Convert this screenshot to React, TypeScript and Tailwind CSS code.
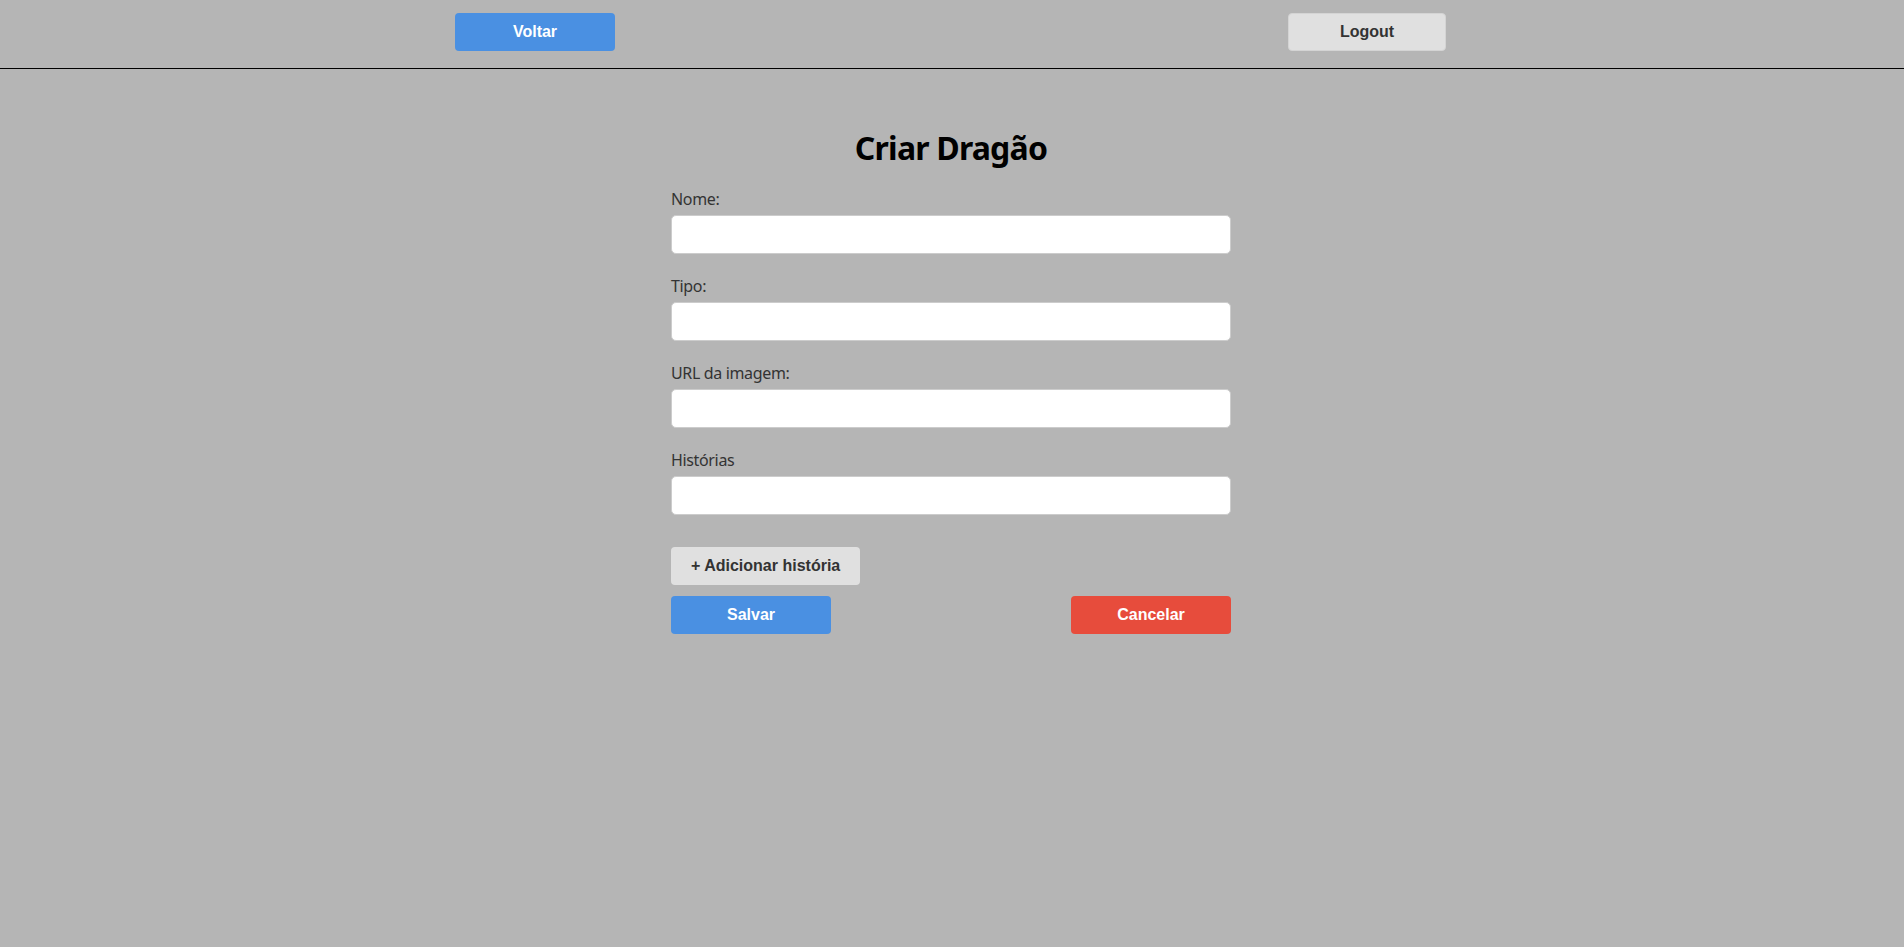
import React from "react";

const sans = { fontFamily: '"Noto Sans", "Open Sans", sans-serif' };
const arial = { fontFamily: '"Liberation Sans", Arial, sans-serif' };

function Field({ label }: { label: string }) {
  return (
    <div className="mb-[22px]">
      <label
        className="block text-[16px] leading-[20px] mb-[6px] text-[#333333] tracking-[-0.35px]"
        style={sans}
      >
        {label}
      </label>
      <input
        type="text"
        className="block w-full h-[39px] bg-white border border-[#cccccc] rounded-[5px] px-[10px] outline-none"
      />
    </div>
  );
}

export default function App() {
  return (
    <div className="min-h-screen bg-[#b5b5b5]">
      <header className="h-[69px] border-b border-black">
        <div className="w-[991px] ml-[455px] flex justify-between pt-[13px]">
          <button
            className="w-[160px] h-[38px] rounded-[4px] bg-[#4a90e2] text-white font-bold text-[16px]"
            style={arial}
          >
            Voltar
          </button>
          <button
            className="w-[158px] h-[38px] rounded-[4px] bg-[#e0e0e0] border border-[#d4d4d4] text-[#333333] font-bold text-[16px]"
            style={arial}
          >
            Logout
          </button>
        </div>
      </header>
      <main className="w-[560px] ml-[671px] pt-[60px]">
        <h1
          className="text-[32px] leading-[38px] font-bold text-center text-black tracking-[-0.8px]"
          style={sans}
        >
          Criar Dragão
        </h1>
        <form className="mt-[22px]" onSubmit={(e) => e.preventDefault()}>
          <Field label="Nome:" />
          <Field label="Tipo:" />
          <Field label="URL da imagem:" />
          <Field label="Histórias" />
          <button
            type="button"
            className="mt-[10px] h-[38px] px-[20px] rounded-[4px] bg-[#e0e0e0] text-[#333333] font-bold text-[16px]"
            style={arial}
          >
            + Adicionar história
          </button>
          <div className="mt-[11px] flex justify-between">
            <button
              type="submit"
              className="w-[160px] h-[38px] rounded-[4px] bg-[#4a90e2] text-white font-bold text-[16px]"
              style={arial}
            >
              Salvar
            </button>
            <button
              type="button"
              className="w-[160px] h-[38px] rounded-[4px] bg-[#e74c3c] text-white font-bold text-[16px]"
              style={arial}
            >
              Cancelar
            </button>
          </div>
        </form>
      </main>
    </div>
  );
}
